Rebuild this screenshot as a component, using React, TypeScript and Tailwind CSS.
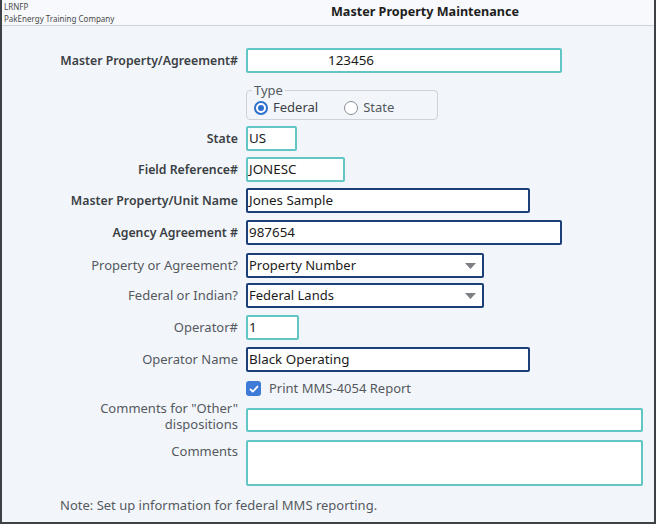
import React from 'react'

const font = { fontFamily: '"Noto Sans", "Open Sans", sans-serif' }

function Label({ children, bold }: { children: React.ReactNode; bold?: boolean }) {
  return (
    <div
      className={`w-[236px] shrink-0 text-right leading-tight ${
        bold ? 'text-[12.3px] font-semibold text-[#3b3f44]' : 'text-[13px] text-[#55595e]'
      }`}
    >
      {children}
    </div>
  )
}

function Field({
  value,
  width,
  tone = 'teal',
  className = '',
}: {
  value?: string
  width: string
  tone?: 'teal' | 'blue'
  className?: string
}) {
  const border = tone === 'teal' ? 'border-[#62c6c4]' : 'border-[#1d3f78]'
  return (
    <div
      className={`flex h-[25px] items-center rounded-[2px] border-2 bg-white px-[1px] text-[13.4px] text-[#1b1b1b] ${border} ${width} ${className}`}
    >
      {value}
    </div>
  )
}

function Select({ value }: { value: string }) {
  return (
    <div className="flex h-[25px] w-[238px] items-center justify-between rounded-[2px] border-2 border-[#1d3f78] bg-white pl-[1px] pr-[6px] text-[13px] text-[#1b1b1b]">
      <span>{value}</span>
      <svg width="11" height="6" viewBox="0 0 11 6">
        <path d="M0 0 L11 0 L5.5 6 Z" fill="#7c7f84" />
      </svg>
    </div>
  )
}

export default function App() {
  return (
    <div
      className="flex h-[524px] w-[656px] flex-col border-b-2 border-l-2 border-r-2 border-[#3e4246] bg-[#f2f6fb]"
      style={font}
    >
      {/* header */}
      <div className="flex h-[26px] shrink-0 items-center border-b border-[#cfd4da] bg-[#f7f9fc]">
        <div className="w-[194px] pl-[2px] text-[8px] leading-[12px] text-[#4a4a4a]">
          <div>LRNFP</div>
          <div>PakEnergy Training Company</div>
        </div>
        <div className="flex-1 text-center text-[12.6px] font-bold text-[#1e1e1e]">
          Master Property Maintenance
        </div>
      </div>

      <div className="flex flex-col">
        <div className="mt-[22px] flex items-center gap-2">
          <Label bold>Master Property/Agreement#</Label>
          <Field value="123456" width="w-[316px]" className="pl-[80px]" />
        </div>

        <div className="mt-[17px] flex gap-2">
          <div className="w-[236px] shrink-0" />
          <div className="relative h-[30px] w-[192px] rounded-[4px] border border-[#cdd2d8] bg-[#f2f6fb]">
            <span className="absolute -top-[9px] left-[5px] bg-[#f2f6fb] px-[2px] text-[13px] leading-[16px] text-[#55595e]">
              Type
            </span>
            <div className="flex h-full items-center pt-[6px] text-[13px] text-[#3b3f44]">
              <span className="ml-[7px] flex items-center gap-[5px]">
                <span className="flex h-[14px] w-[14px] items-center justify-center rounded-full border-2 border-[#2d6fcd] bg-white">
                  <span className="h-[6px] w-[6px] rounded-full bg-[#2d6fcd]" />
                </span>
                Federal
              </span>
              <span className="ml-[26px] flex items-center gap-[5px] text-[#55595e]">
                <span className="h-[14px] w-[14px] rounded-full border border-[#8a8e94] bg-white" />
                State
              </span>
            </div>
          </div>
        </div>

        <div className="mt-[6px] flex items-center gap-2">
          <Label bold>State</Label>
          <Field value="US" width="w-[51px]" />
        </div>

        <div className="mt-[6px] flex items-center gap-2">
          <Label bold>Field Reference#</Label>
          <Field value="JONESC" width="w-[99px]" />
        </div>

        <div className="mt-[6px] flex items-center gap-2">
          <Label bold>Master Property/Unit Name</Label>
          <Field value="Jones Sample" width="w-[284px]" tone="blue" />
        </div>

        <div className="mt-[7px] flex items-center gap-2">
          <Label bold>Agency Agreement #</Label>
          <Field value="987654" width="w-[316px]" tone="blue" />
        </div>

        <div className="mt-[8px] flex items-center gap-2">
          <Label>Property or Agreement?</Label>
          <Select value="Property Number" />
        </div>

        <div className="mt-[5px] flex items-center gap-2">
          <Label>Federal or Indian?</Label>
          <Select value="Federal Lands" />
        </div>

        <div className="mt-[7px] flex items-center gap-2">
          <Label>Operator#</Label>
          <Field value="1" width="w-[53px]" />
        </div>

        <div className="mt-[7px] flex items-center gap-2">
          <Label>Operator Name</Label>
          <Field value="Black Operating" width="w-[284px]" tone="blue" />
        </div>

        <div className="mt-[7px] flex items-center gap-2">
          <div className="w-[236px] shrink-0" />
          <div className="flex items-center gap-[8px] text-[13px] text-[#55595e]">
            <span className="flex h-[15px] w-[15px] items-center justify-center rounded-[3px] bg-[#3d7bd6]">
              <svg width="10" height="8" viewBox="0 0 10 8">
                <path d="M1 4 L3.8 6.6 L9 1.2" fill="none" stroke="white" strokeWidth="1.8" />
              </svg>
            </span>
            Print MMS-4054 Report
          </div>
        </div>

        <div className="mt-[1px] flex items-end gap-2">
          <Label>
            Comments for "Other"
            <br />
            dispositions
          </Label>
          <div className="h-[24px] w-[397px] rounded-[2px] border-2 border-[#62c6c4] bg-white" />
        </div>

        <div className="mt-[8px] flex items-start gap-2">
          <div className="w-[236px] shrink-0 pt-[3px] text-right text-[13px] leading-tight text-[#55595e]">
            Comments
          </div>
          <div className="h-[46px] w-[397px] rounded-[2px] border-2 border-[#62c6c4] bg-white" />
        </div>

        <div className="mt-[10px] pl-[58px] text-[13px] text-[#55595e]">
          Note: Set up information for federal MMS reporting.
        </div>
      </div>
    </div>
  )
}
